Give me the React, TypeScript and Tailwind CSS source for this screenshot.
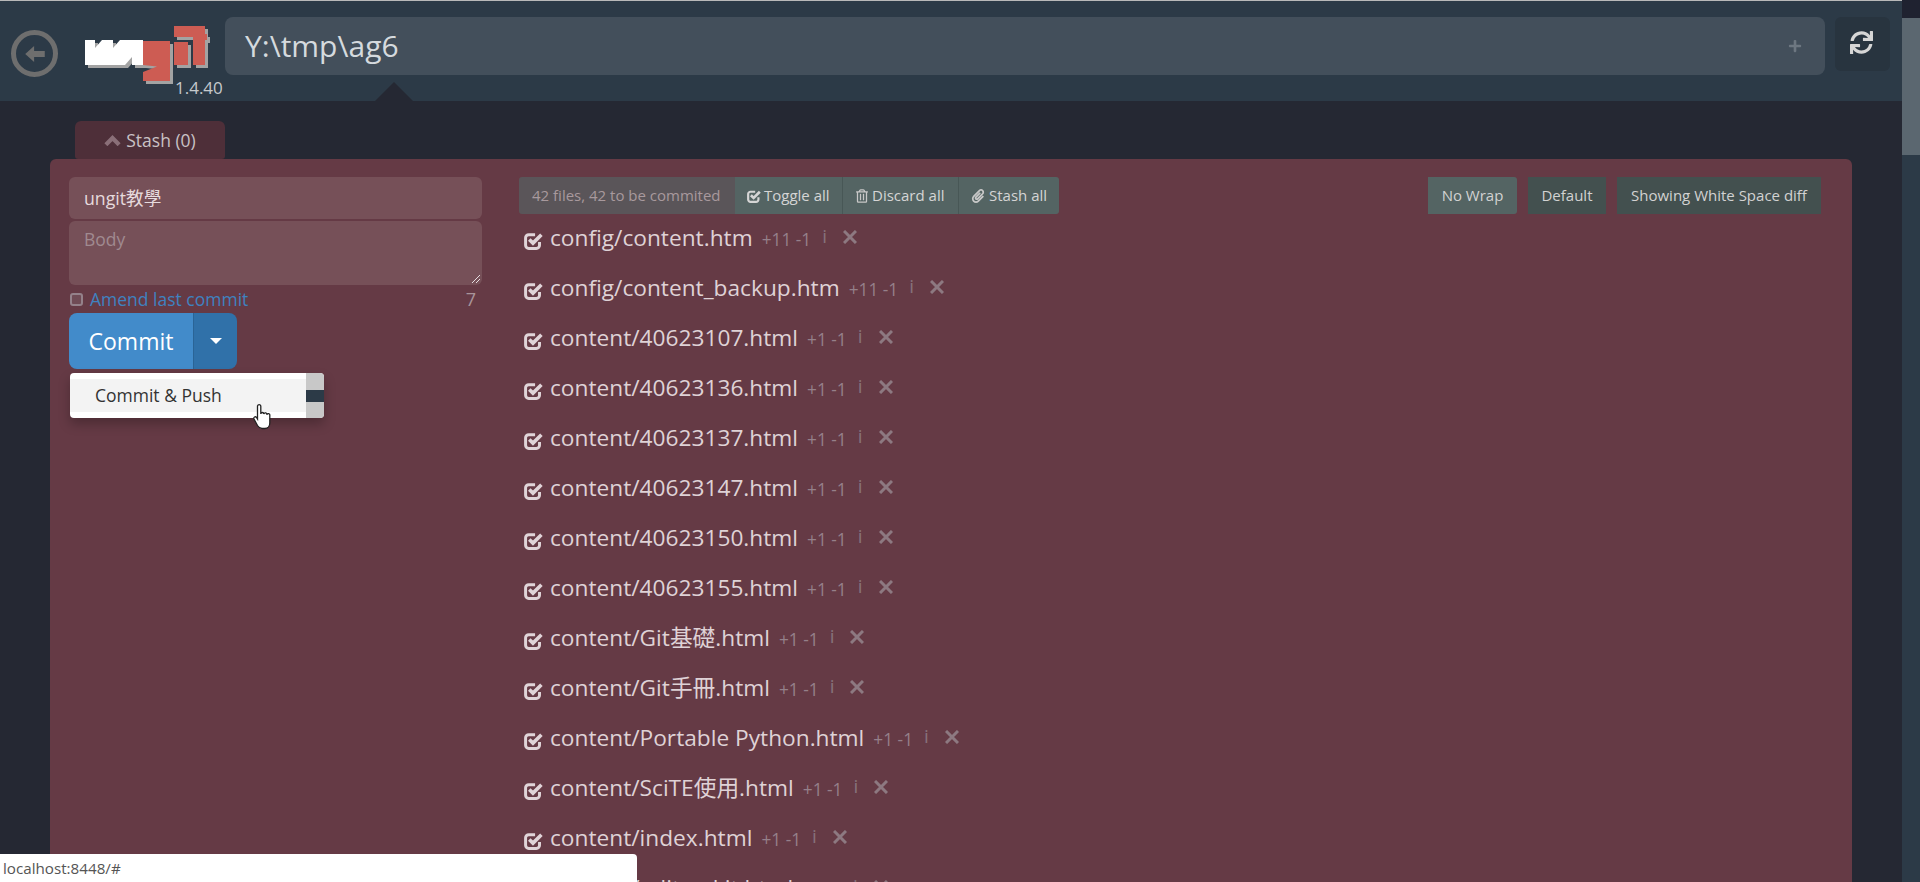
import { FaPaperclip, FaPlus, FaRegTrashAlt, FaSync } from "react-icons/fa";

const files = [
  { name: "config/content.htm", stat: "+11 -1" },
  { name: "config/content_backup.htm", stat: "+11 -1" },
  { name: "content/40623107.html", stat: "+1 -1" },
  { name: "content/40623136.html", stat: "+1 -1" },
  { name: "content/40623137.html", stat: "+1 -1" },
  { name: "content/40623147.html", stat: "+1 -1" },
  { name: "content/40623150.html", stat: "+1 -1" },
  { name: "content/40623155.html", stat: "+1 -1" },
  { name: "content/Git基礎.html", stat: "+1 -1" },
  { name: "content/Git手冊.html", stat: "+1 -1" },
  { name: "content/Portable Python.html", stat: "+1 -1" },
  { name: "content/SciTE使用.html", stat: "+1 -1" },
  { name: "content/index.html", stat: "+1 -1" },
  { name: "content/editor_kit.html", stat: "+1 -1" },
];

function CheckIcon({ className }: { className: string }) {
  return (
    <svg viewBox="0 0 18 18" className={className} fill="none" stroke="currentColor">
      <path d="M14.700 10.500V13.500a3 3 0 0 1-3 3H4.500a3 3 0 0 1-3-3V6.500a3 3 0 0 1 3-3h6" strokeWidth="2.800" />
      <path d="M5 8l3.500 3.500L16.500 3.500" strokeWidth="3.400" />
    </svg>
  );
}

const whiteShape = "M0 14H10V22L17 14H28V22L35 14H58V39H47V31L40 39H0Z";
const redShapes = [
  "M58 15H85V55H58V46L72 40.500L58 39Z",
  "M89 0H120V8H122V14H120V39H108V11H89Z",
  "M89 16H103V39H89Z",
];

function Logo() {
  return (
    <svg viewBox="0 0 126 64" className="w-[126px] h-[64px]">
      <g fill="#a3a3a3" transform="translate(3 3)">
        <path d={whiteShape} />
        {redShapes.map((d) => (
          <path key={d} d={d} />
        ))}
      </g>
      <path d={whiteShape} fill="#ffffff" />
      <g fill="#cd5c53">
        {redShapes.map((d) => (
          <path key={d} d={d} />
        ))}
      </g>
    </svg>
  );
}

function FileRow({ name, stat }: { name: string; stat: string }) {
  return (
    <div className="h-[50px] flex items-center shrink-0">
      <CheckIcon className="w-[19px] h-[19px] ml-[5px] mt-[4px] text-[#e0d4d8]" />
      <span className="ml-[7px] text-[22.700px] leading-none text-[#dfd2d6]">{name}</span>
      <span className="ml-[9px] mt-[3px] text-[17.300px] leading-none text-[#95808a]">{stat}</span>
      <span className="ml-[11px] mb-[4px] text-[19px] leading-none text-[#87727b]">i</span>
      <svg viewBox="0 0 14 14" className="ml-[16px] mb-[3px] w-[14px] h-[14px] text-[#8d7981]" stroke="currentColor" strokeWidth="3">
        <path d="M1 1l12 12M13 1L1 13" />
      </svg>
    </div>
  );
}

export default function App() {
  return (
    <div className="relative h-[882px] w-[1920px] overflow-hidden flex bg-[#252833] font-['Open_Sans','Noto_Sans_CJK_TC',sans-serif]">
      <div className="flex-1 flex flex-col min-w-0">
        <div className="h-px bg-[#b9b9b9] shrink-0" />
        <header className="relative h-[100px] shrink-0 bg-[#2c3a47] flex items-start">
          <div className="ml-[11px] mt-[29px] w-[47px] h-[47px] rounded-full border-[5px] border-[#6e6e6e] flex items-center justify-center">
            <svg viewBox="0 0 22 18" className="w-[20px] h-[16px]" fill="#6e6e6e">
              <path d="M0 9l10-9v5.500h12v7H10V18z" />
            </svg>
          </div>
          <div className="relative ml-[27px] mt-[25px] w-[131px] h-[75px]">
            <Logo />
            <span className="absolute left-[90px] top-[51px] text-[17px] leading-[22px] text-[#c5c9cc]">1.4.40</span>
          </div>
          <div className="ml-[9px] mt-[16px] w-[1600px] h-[58px] rounded-[8px] bg-[#434f5b] flex items-center px-[20px]">
            <span className="text-[30px] leading-none text-[#d5dade]">Y:\tmp\ag6</span>
            <FaPlus className="ml-auto mr-[3px] w-[14px] h-[14px] text-[#6d7781]" />
          </div>
          <div className="ml-[10px] mt-[16px] w-[55px] h-[54px] rounded-[6px] bg-[#28343f] flex items-center justify-center">
            <FaSync className="w-[23px] h-[23px] mb-[3px] mr-[2px] text-[#d6d6d6]" />
          </div>
          <div className="absolute left-[375px] bottom-0 w-0 h-0 border-x-[19px] border-x-transparent border-b-[19px] border-b-[#252833]" />
        </header>

        <div className="ml-[75px] mt-[20px] w-[150px] h-[38px] shrink-0 rounded-t-[6px] rounded-b-[3px] bg-[#4e2f39] flex items-center justify-center text-[17.500px] text-[#c9c2c5]">
          <svg viewBox="0 0 18 12" className="w-[17px] h-[12px] mr-[5px] text-[#8a6f78]" fill="none" stroke="currentColor" strokeWidth="4.500">
            <path d="M2 11l7-7 7 7" />
          </svg>
          Stash (0)
        </div>

        <main className="ml-[50px] w-[1802px] flex-1 rounded-t-[6px] bg-[#653a45] flex items-start pl-[19px] pr-[31px] pt-[18px]">
          <div className="w-[413px] shrink-0">
            <div className="h-[42px] rounded-[6px] bg-[#765058] flex items-center px-[15px] text-[17.700px] text-[#e6dadd]">ungit教學</div>
            <div className="relative mt-[2px] h-[64px] rounded-[6px] bg-[#765058] px-[15px] pt-[6px] text-[17.500px] leading-[24px] text-[#a08a90]">
              Body
              <svg viewBox="0 0 10 10" className="absolute right-[1px] bottom-[1px] w-[10px] h-[10px]" stroke="#e4dde0" strokeWidth="1">
                <path d="M1 9l8-8M5 9l4-4" />
              </svg>
            </div>
            <div className="h-[28px] flex items-center">
              <span className="ml-[1px] w-[13px] h-[13px] rounded-[3px] border-2 border-[#94818a] bg-[#6f4b55]" />
              <span className="ml-[7px] text-[17.500px] text-[#3f82c0]">Amend last commit</span>
              <span className="ml-auto mr-[6px] text-[18px] text-[#a8949a]">7</span>
            </div>
            <div className="flex h-[56px] w-[168px]">
              <div className="w-[124px] rounded-l-[8px] bg-[#428bca] flex items-center justify-center text-[23px] text-white">Commit</div>
              <div className="flex-1 rounded-r-[8px] bg-[#3071a9] border-l border-[#2a6496] flex items-center justify-center">
                <span className="w-0 h-0 border-x-[6px] border-x-transparent border-t-[6px] border-t-white" />
              </div>
            </div>
            <div className="relative mt-[4px] ml-[1px] w-[254px] h-[45px] rounded-[4px] bg-white shadow-[0_6px_12px_rgba(0,0,0,0.25)] overflow-hidden flex">
              <div className="w-[236px] mt-[6px] h-[33px] bg-[#f3f3f3] flex items-center pl-[25px] text-[17.500px] text-[#333333]">Commit &amp; Push</div>
              <div className="w-[18px] bg-[#c8c8c8] flex flex-col justify-center">
                <div className="h-[12px] bg-[#2c3a47]" />
              </div>
            </div>
          </div>

          <div className="ml-[37px] flex-1 min-w-0">
            <div className="flex items-start">
              <div className="flex h-[37px] rounded-[3px] overflow-hidden text-[15px] text-[#d5d5d5]">
                <div className="w-[216px] bg-[#5a5559] flex items-center pl-[13px] text-[15px] text-[#a8999d]">42 files, 42 to be commited</div>
                <div className="w-[108px] bg-[#546463] border-r border-[#485756] flex items-center pl-[12px]">
                  <CheckIcon className="w-[14px] h-[14px] mr-[3px] text-[#d5d5d5]" />
                  Toggle all
                </div>
                <div className="w-[116px] bg-[#546463] border-r border-[#485756] flex items-center pl-[13px]">
                  <FaRegTrashAlt className="w-[12px] h-[14px] mr-[4px] text-[#c8c8c8]" />
                  Discard all
                </div>
                <div className="w-[100px] bg-[#546463] flex items-center pl-[12px]">
                  <FaPaperclip className="w-[14px] h-[14px] mr-[4px] text-[#c8c8c8]" />
                  Stash all
                </div>
              </div>
              <div className="ml-auto flex gap-[11px] text-[15px] text-[#d2d2d2]">
                <div className="w-[89px] h-[37px] rounded-r-[3px] bg-[#546463] flex items-center justify-center">No Wrap</div>
                <div className="w-[78px] h-[37px] bg-[#43504f] flex items-center justify-center">Default</div>
                <div className="w-[204px] h-[37px] bg-[#43504f] flex items-center justify-center">Showing White Space diff</div>
              </div>
            </div>
            <div className="-mt-px flex flex-col">
              {files.map((f) => (
                <FileRow key={f.name} name={f.name} stat={f.stat} />
              ))}
            </div>
          </div>
        </main>
      </div>

      <div className="w-[18px] shrink-0 flex flex-col bg-[#2c3a47]">
        <div className="h-[18px] bg-[#1f2230]" />
        <div className="h-[137px] bg-[#5b6770]" />
      </div>

      <div className="absolute left-0 bottom-0 w-[637px] h-[28px] rounded-tr-[4px] bg-white flex items-center pl-[3px] text-[15.200px] text-[#555555]">
        localhost:8448/#
      </div>

      <svg viewBox="0 0 18 26" className="absolute left-[253px] top-[404px] w-[18px] h-[26px]" fill="#ffffff" stroke="#222222" strokeWidth="1.300">
        <path d="M4.500 2a1.700 1.700 0 0 1 3.300 0v8a1.500 1.500 0 0 1 3 0 1.500 1.500 0 0 1 3 .8 1.500 1.500 0 0 1 3 .7V19c0 3-2 5.500-5 5.500H9c-2.500 0-3.500-1.500-4.500-3L1 15c-.8-1.800 1.500-3 2.500-1.500l1 1.500z" />
      </svg>
    </div>
  );
}
